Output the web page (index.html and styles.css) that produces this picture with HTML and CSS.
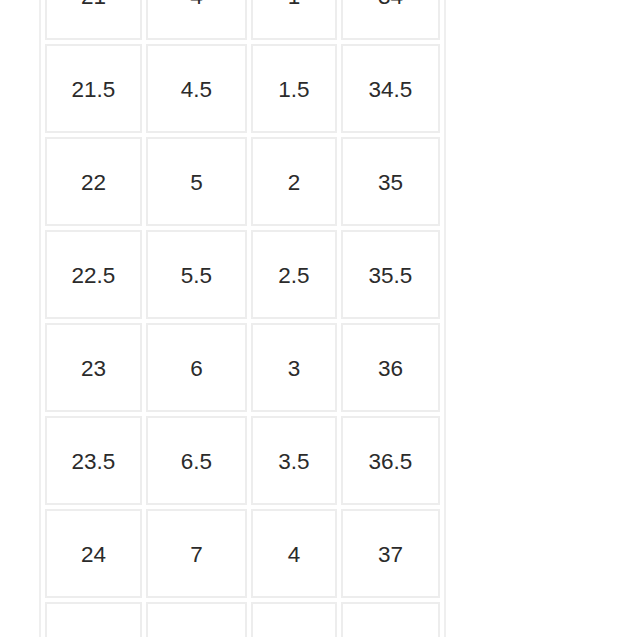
FILE: index.html
```html
<!DOCTYPE html>
<html>
<head>
<meta charset="utf-8">
<link rel="stylesheet" href="styles.css">
</head>
<body>
<table class="size-table">
  <colgroup>
    <col class="c-mm"><col class="c-us"><col class="c-uk"><col class="c-eu">
  </colgroup>
  <tbody>
    <tr><td>21</td><td>4</td><td>1</td><td>34</td></tr>
    <tr><td>21.5</td><td>4.5</td><td>1.5</td><td>34.5</td></tr>
    <tr><td>22</td><td>5</td><td>2</td><td>35</td></tr>
    <tr><td>22.5</td><td>5.5</td><td>2.5</td><td>35.5</td></tr>
    <tr><td>23</td><td>6</td><td>3</td><td>36</td></tr>
    <tr><td>23.5</td><td>6.5</td><td>3.5</td><td>36.5</td></tr>
    <tr><td>24</td><td>7</td><td>4</td><td>37</td></tr>
    <tr><td>24.5</td><td>7.5</td><td>4.5</td><td>37.5</td></tr>
  </tbody>
</table>
</body>
</html>
```

FILE: styles.css
```css
html, body {
  margin: 0;
  padding: 0;
  background: #ffffff;
  overflow: hidden;
}

body {
  padding-left: 39px;
  font-family: "Liberation Sans", Arial, Helvetica, sans-serif;
}

.size-table {
  margin-top: -55px;
  border: 2px solid #efefef;
  border-collapse: separate;
  border-spacing: 4px;
  table-layout: fixed;
}

.c-mm { width: 97px; }
.c-us { width: 101px; }
.c-uk { width: 86px; }
.c-eu { width: 99px; }

.size-table td {
  box-sizing: border-box;
  height: 89px;
  padding: 3px 0 0;
  border: 2px solid #ededed;
  text-align: center;
  vertical-align: middle;
  font-size: 22.5px;
  color: #2b2b2b;
}
```
